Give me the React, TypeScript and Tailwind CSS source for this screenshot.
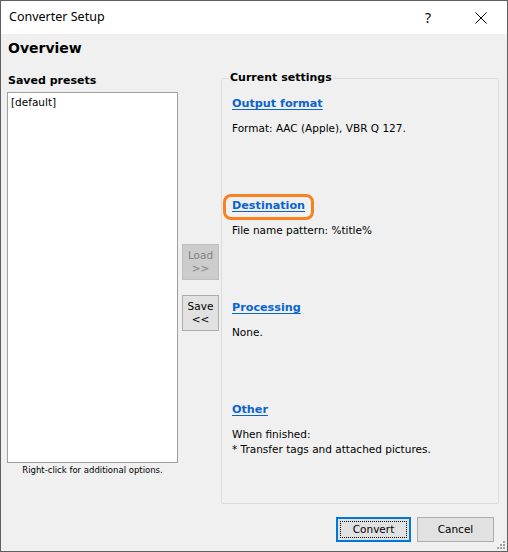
import React from "react";

const uiFont = { fontFamily: '"DejaVu Sans", Verdana, sans-serif' };

interface SectionProps {
    title: string;
    lines: string[];
    highlighted?: boolean;
}

const Section: React.FC<SectionProps> = ({ title, lines, highlighted }) => (
    <div className="h-[102px]">
        <div className="h-[26px] flex items-center">
            {highlighted ? (
                <span className="-ml-[9px] inline-flex h-[26px] items-center rounded-[8px] border-[3px] border-[#f7821f] px-[6px]">
                    <a className="text-[11.2px] font-bold text-[#0a64cf] underline underline-offset-[2px]">{title}</a>
                </span>
            ) : (
                <a className="text-[11.2px] font-bold text-[#0a64cf] underline underline-offset-[2px]">{title}</a>
            )}
        </div>
        <div className="mt-[3px] text-[10.5px] leading-[15px] text-black">
            {lines.map((l) => (
                <div key={l}>{l}</div>
            ))}
        </div>
    </div>
);

export default function App() {
    return (
        <div className="relative w-[508px] h-[552px] border border-[#5f5f5f] bg-[#f0f0f0] flex flex-col" style={uiFont}>
            <div className="h-[33px] bg-white flex items-center shrink-0">
                <span className="pl-[8px] text-[12.5px] text-black" style={{ fontFamily: '"Noto Sans", "Open Sans", sans-serif' }}>
                    Converter Setup
                </span>
                <span className="ml-auto mr-[44px] text-[14px] text-black" style={{ fontFamily: '"Noto Sans", sans-serif' }}>?</span>
                <svg width="12" height="12" viewBox="0 0 12 12" className="mr-[20px]">
                    <path d="M0.5 0.5 L11.5 11.5 M11.5 0.5 L0.5 11.5" stroke="#000" strokeWidth="1" />
                </svg>
            </div>

            <div className="flex-1 flex flex-col px-[6px]">
                <div className="h-[28px] flex items-center text-[14px] font-bold text-black pl-[1px]">Overview</div>

                <div className="flex mt-[16px]">
                    <div className="w-[171px] flex flex-col">
                        <div className="h-[14px] flex items-center text-[11px] font-bold text-black -mt-[4px] mb-[4px] pl-[1px]">Saved presets</div>
                        <div className="h-[371px] bg-white border border-[#a0a0a0] px-[3px] pt-[2px] text-[10.5px] text-black">
                            [default]
                        </div>
                        <div className="mt-[1px] text-center text-[8.5px] text-black">Right-click for additional options.</div>
                    </div>

                    <div className="w-[37px] ml-[4px] flex flex-col pt-[166px] gap-[15px]">
                        <button className="h-[36px] w-[37px] bg-[#cccccc] border border-[#bfbfbf] text-[10.5px] leading-[13px] text-[#838383]">
                            Load
                            <br />
                            &gt;&gt;
                        </button>
                        <button className="h-[36px] w-[37px] bg-[#e1e1e1] border border-[#adadad] text-[10.5px] leading-[13px] text-black">
                            Save
                            <br />
                            &lt;&lt;
                        </button>
                    </div>

                    <fieldset className="ml-[2px] w-[278px] h-[434px] -mt-[8px] border border-[#dcdcdc] rounded-[2px] pl-[10px] pr-[6px]">
                        <legend className="ml-[-3px] px-[1px] text-[11px] font-bold text-black">Current settings</legend>
                        <div className="mt-[5px]">
                            <Section title="Output format" lines={["Format: AAC (Apple), VBR Q 127."]} />
                            <Section title="Destination" lines={["File name pattern: %title%"]} highlighted />
                            <Section title="Processing" lines={["None."]} />
                            <Section title="Other" lines={["When finished:", "* Transfer tags and attached pictures."]} />
                        </div>
                    </fieldset>
                </div>

                <div className="flex justify-end gap-[6px] mt-[13px] pr-[7px]">
                    <button className="h-[25px] w-[75px] bg-[#e1e1e1] border-2 border-[#0078d7] text-[10.5px] text-black flex items-center justify-center">
                        <span className="border border-dotted border-[#000] w-[67px] h-[17px] flex items-center justify-center">Convert</span>
                    </button>
                    <button className="h-[25px] w-[77px] bg-[#e1e1e1] border border-[#adadad] text-[10.5px] text-black">Cancel</button>
                </div>
            </div>

            <svg width="10" height="10" viewBox="0 0 10 10" className="absolute right-[1px] bottom-[1px]">
                <rect x="7" y="1" width="2" height="2" fill="#a0a0a0" />
                <rect x="4" y="4" width="2" height="2" fill="#a0a0a0" />
                <rect x="7" y="4" width="2" height="2" fill="#a0a0a0" />
                <rect x="1" y="7" width="2" height="2" fill="#a0a0a0" />
                <rect x="4" y="7" width="2" height="2" fill="#a0a0a0" />
                <rect x="7" y="7" width="2" height="2" fill="#a0a0a0" />
            </svg>
        </div>
    );
}
